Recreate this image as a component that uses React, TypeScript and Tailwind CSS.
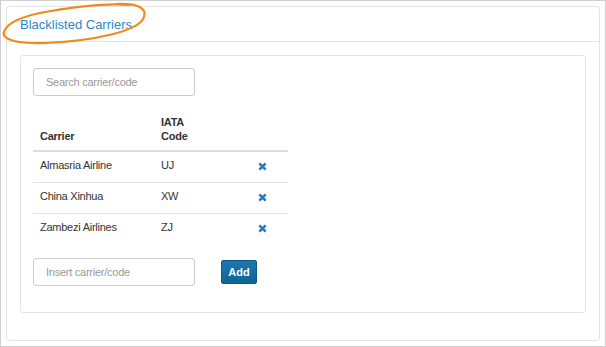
const carriers = [
  { name: 'Almasria Airline', code: 'UJ' },
  { name: 'China Xinhua', code: 'XW' },
  { name: 'Zambezi Airlines', code: 'ZJ' },
];

function RemoveIcon() {
  return (
    <svg width="9" height="9" viewBox="0 0 10 10" className="text-[#2a78b5]">
      <path d="M1.5 1.5 L8.5 8.5 M8.5 1.5 L1.5 8.5" stroke="currentColor" strokeWidth="2.8" />
    </svg>
  );
}

export default function App() {
  return (
    <div
      className="relative w-[606px] h-[347px] border border-[#cfcfcf] bg-white p-[5px] text-[11px] tracking-[-0.25px] text-[#333]"
      style={{ fontFamily: '"Liberation Sans", Arial, sans-serif' }}
    >
      <div className="flex h-full flex-col rounded-[3px] border border-[#e3e3e3]">
        <div className="flex h-[35px] items-center border-b border-[#e3e3e3] px-[13px] pt-[1px]">
          <span className="text-[13px] tracking-normal text-[#2b89c5]">Blacklisted Carriers</span>
        </div>

        <div className="flex-1 px-[13px] pt-[13px] pb-[27px]">
          <div className="h-full rounded-[3px] border border-[#e3e3e3] px-[12px] pt-[12px]">
            <div className="flex h-[28px] w-[162px] items-center rounded-[3px] border border-[#cccccc] px-[12px] text-[#999]">
              Search carrier/code
            </div>

            <table className="mt-[19px] w-[255px] border-collapse">
              <thead>
                <tr className="border-b-2 border-[#dddddd] text-left align-bottom">
                  <th className="w-[121px] px-[7px] pb-[7px] font-bold leading-[14px]">Carrier</th>
                  <th className="w-[90px] px-[7px] pb-[7px] font-bold leading-[14px]">
                    IATA
                    <br />
                    Code
                  </th>
                  <th></th>
                </tr>
              </thead>
              <tbody>
                {carriers.map((c, i) => (
                  <tr key={c.code} className={i < carriers.length - 1 ? 'h-[31px] border-b border-[#e3e3e3]' : 'h-[31px]'}>
                    <td className="px-[7px] pb-[3px]">{c.name}</td>
                    <td className="px-[7px] pb-[3px]">{c.code}</td>
                    <td className="pl-[14px] pb-[1px]">
                      <RemoveIcon />
                    </td>
                  </tr>
                ))}
              </tbody>
            </table>

            <div className="mt-[14px] flex items-center gap-[26px]">
              <div className="flex h-[28px] w-[162px] items-center rounded-[3px] border border-[#cccccc] px-[12px] text-[#999]">
                Insert carrier/code
              </div>
              <button className="h-[24px] w-[36px] rounded-[2px] border border-[#0d5a88] bg-gradient-to-b from-[#1b78ab] to-[#0f6497] text-[11px] font-bold tracking-normal text-white">
                Add
              </button>
            </div>
          </div>
        </div>
      </div>

      {/* hand-drawn highlight around the title */}
      <svg className="pointer-events-none absolute left-0 top-0" width="150" height="48" viewBox="0 0 150 48" fill="none">
        <path
          d="M116 3 C 136 2, 146 7, 143 16 C 139 30, 92 40, 45 42 C 15 43, 0 38, 3 31 C 6 21, 25 14, 50 10 C 80 5, 108 2, 128 4"
          stroke="#f08a1c"
          strokeWidth="2.2"
          strokeLinecap="round"
        />
      </svg>
    </div>
  );
}
